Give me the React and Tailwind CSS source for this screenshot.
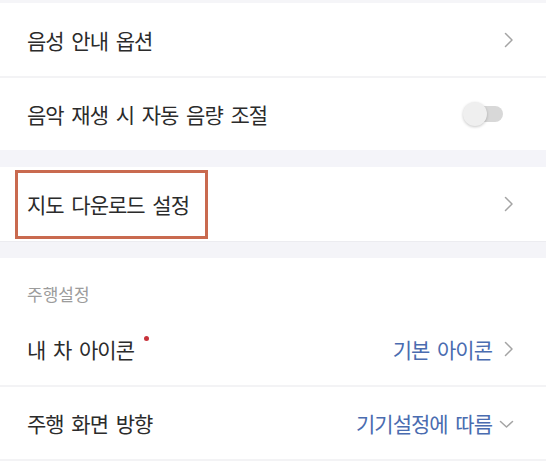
const font = { fontFamily: '"Noto Sans CJK KR", "Noto Sans", sans-serif' };

function Chevron() {
  return (
    <svg width="10" height="16" viewBox="0 0 10 16" fill="none" className="shrink-0">
      <polyline points="1.5,1.5 8,8 1.5,14.5" stroke="#a4a4a4" strokeWidth="1.5" strokeLinecap="round" strokeLinejoin="round" />
    </svg>
  );
}

function ChevronDown() {
  return (
    <svg width="15" height="9" viewBox="0 0 15 9" fill="none" className="mt-[3px] shrink-0">
      <polyline points="1.5,1.5 7.5,7 13.5,1.5" stroke="#a4a4a4" strokeWidth="1.5" strokeLinecap="round" strokeLinejoin="round" />
    </svg>
  );
}

function Toggle() {
  return (
    <div className="relative h-[26px] w-[40px]">
      <div className="absolute right-0 top-[5px] h-[16px] w-[28px] rounded-full bg-[#d8d8d8]" />
      <div className="absolute left-0 top-[1px] h-[24px] w-[24px] rounded-full bg-[#efefef] shadow-[0_1px_3px_rgba(0,0,0,0.22)]" />
    </div>
  );
}

const label = "text-[21px] tracking-[-1px] [word-spacing:4px] leading-[28px]";

export default function App() {
  return (
    <div className="w-[546px] h-[466px] overflow-hidden bg-white text-[#2b2b2b]" style={font}>
      <div className="h-[3px] bg-[#f5f5f8]" />

      {/* 음성 안내 옵션 */}
      <div className="flex h-[73px] items-center justify-between pl-[27px] pr-[32px]">
        <span className={label}>음성 안내 옵션</span>
        <Chevron />
      </div>
      <div className="h-[2px] bg-[#f3f3f5]" />

      {/* 음악 재생 */}
      <div className="flex h-[72px] items-center justify-between pl-[27px] pr-[43px]">
        <span className={label}>음악 재생 시 자동 음량 조절</span>
        <Toggle />
      </div>

      <div className="h-[17px] bg-[#f4f4f9]" />

      {/* 지도 다운로드 설정 */}
      <div className="flex h-[74px] items-center justify-between pl-[15px] pr-[32px]">
        <div className="flex h-[69px] w-[193px] items-center border-[3px] border-[#c96a4f] pl-[9px]">
          <span className={label}>지도 다운로드 설정</span>
        </div>
        <Chevron />
      </div>

      <div className="h-[17px] border-t border-[#ececf0] bg-[#f4f4f8]" />

      {/* 주행설정 */}
      <div className="h-[54px] pl-[27px] pt-[24px]">
        <span className="block text-[17px] leading-[24px] text-[#9c9c9c]">주행설정</span>
      </div>

      <div className="flex h-[73px] items-center justify-between pl-[27px] pr-[32px]">
        <span className={`relative ${label}`}>
          내 차 아이콘
          <span className="absolute -right-[15px] top-[1px] h-[5px] w-[5px] rounded-full bg-[#c8333b]" />
        </span>
        <div className="flex items-center gap-[12px]">
          <span className={`${label} text-[#4a6cb0]`}>기본 아이콘</span>
          <Chevron />
        </div>
      </div>
      <div className="h-[2px] bg-[#f3f3f5]" />

      <div className="flex h-[72px] items-center justify-between pl-[27px] pr-[32px]">
        <span className={label}>주행 화면 방향</span>
        <div className="flex items-center gap-[7px]">
          <span className={`${label} text-[#4a6cb0]`}>기기설정에 따름</span>
          <ChevronDown />
        </div>
      </div>
      <div className="h-[2px] bg-[#f3f3f5]" />
    </div>
  );
}
